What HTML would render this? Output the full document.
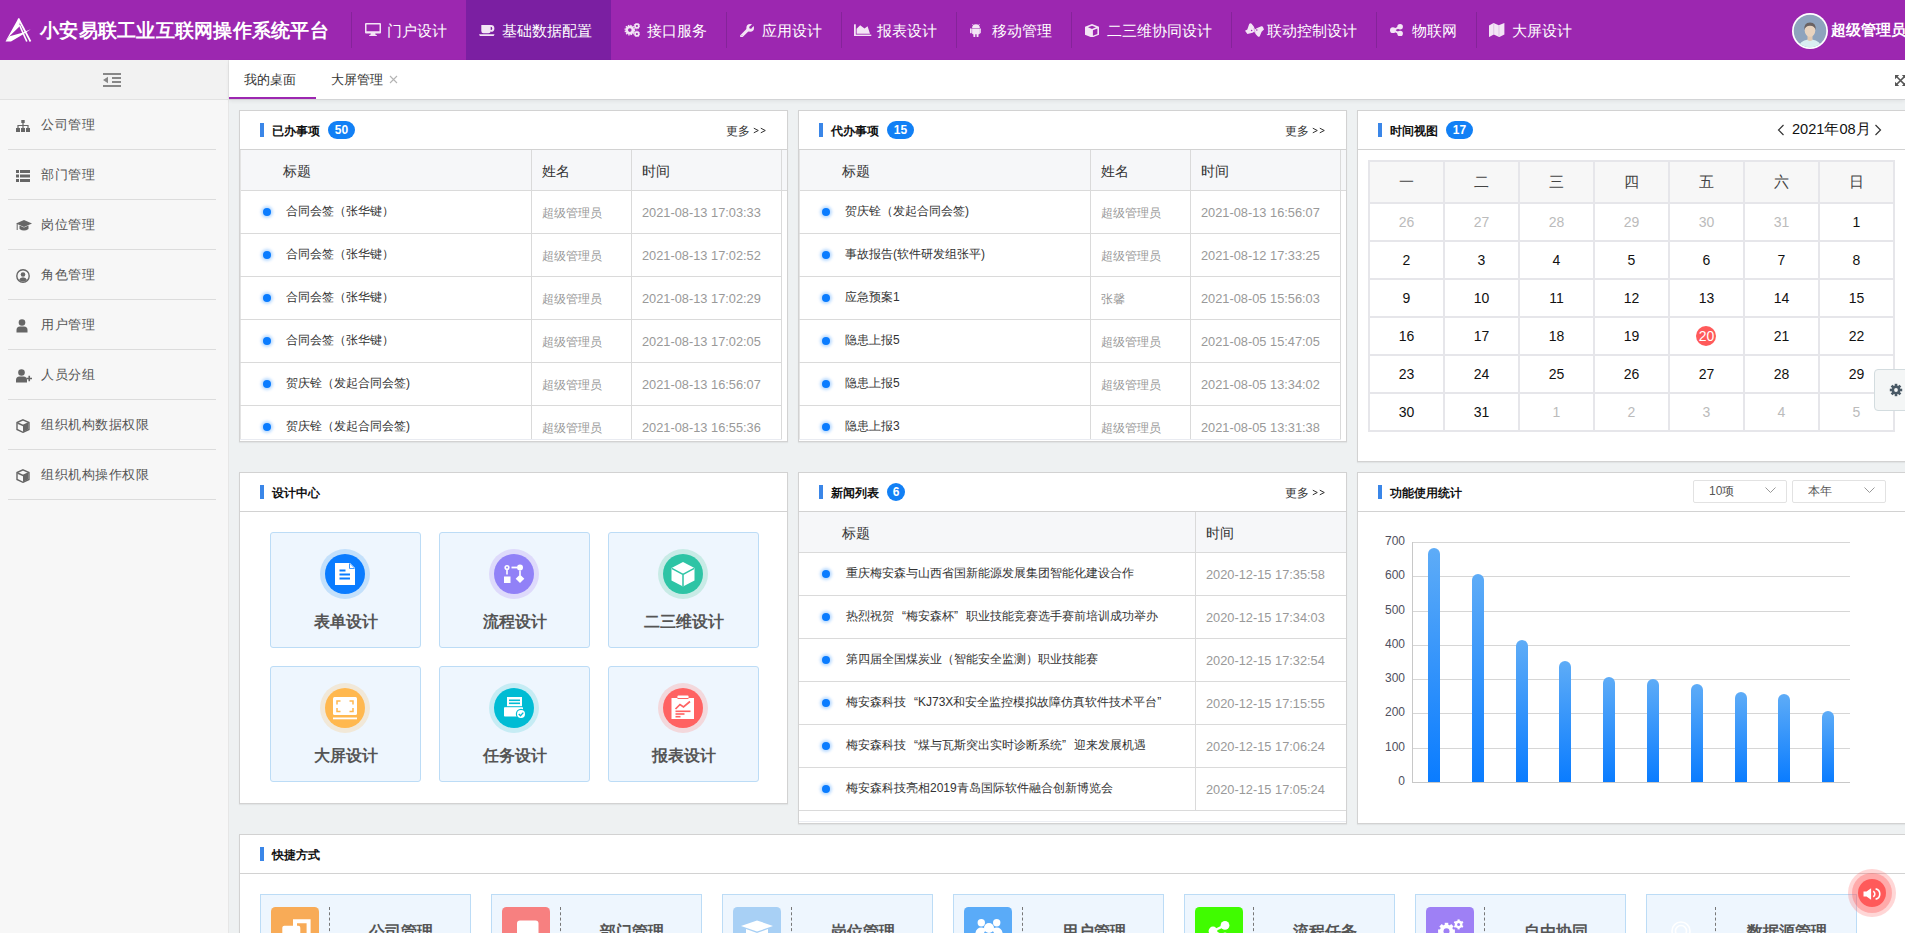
<!DOCTYPE html><html><head><meta charset="utf-8"><title>dashboard</title><style>
*{box-sizing:border-box;margin:0;padding:0}
html,body{width:1905px;height:933px;overflow:hidden}
body{font-family:"Liberation Sans",sans-serif;background:#eef1f2;position:relative;color:#333}
div,span,svg{position:absolute}
.nw{white-space:nowrap}
</style></head><body>
<div style="left:0px;top:0px;width:1905px;height:60px;background:#9c27b0"></div>
<svg style="left:2px;top:14px" width="34" height="32" viewBox="2 14 34 32"><path d="M18.4 18.3 L20 21.5 L19.2 26.8 L10.2 35.6 L6.0 41.6 L5.6 41.2 Z" fill="#fff"/><path d="M5.8 41.6 L11 41.4 L22 35 L30.8 29.3 L22.3 32.8 L9.6 36.2 Z" fill="#fff"/><path d="M18.4 18.5 L30.5 41.5" stroke="#fff" stroke-width="1.7"/><path d="M19.5 25 L26.8 41.5" stroke="#fff" stroke-width="1.6"/></svg>
<div class="nw" style="left:40px;top:18px;font-size:19px;line-height:26px;color:#fff;font-weight:bold;letter-spacing:0.25px;">小安易联工业互联网操作系统平台</div>
<div style="left:351px;top:0px;width:115px;height:60px;"><div style="left:0;top:12px;width:1px;height:36px;background:#85239a"></div><svg style="left:13.5px;top:23px" width="16" height="13" viewBox="0 0 16 13"><path d="M1 0H15A1 1 0 0 1 16 1V9.5A1 1 0 0 1 15 10.5H10.2L10.7 12H11.8V13H4.2V12H5.3L5.8 10.5H1A1 1 0 0 1 0 9.5V1A1 1 0 0 1 1 0ZM1.5 1.5V8.2H14.5V1.5Z" fill="#f3e5f5" fill-rule="evenodd"/></svg><div class="nw" style="left:36px;top:22px;font-size:15px;line-height:18px;color:#fff">门户设计</div></div>
<div style="left:466px;top:0px;width:145px;height:60px;background:#7b1fa2;"><svg style="left:13.3px;top:24.8px" width="15.6" height="11.4" viewBox="0 0 15.6 11.4"><path d="M2.3 0H12A3.4 3.4 0 0 1 12 6.8H11.7V6A2.2 2.2 0 0 1 9.5 8.2H4.5A2.2 2.2 0 0 1 2.3 6ZM11.7 1.8V5A1.6 1.6 0 0 0 11.7 1.8Z" fill="#f3e5f5" fill-rule="evenodd"/><path d="M0 9.2H15.6L14.6 11.2H1Z" fill="#f3e5f5"/></svg><div class="nw" style="left:36px;top:22px;font-size:15px;line-height:18px;color:#fff">基础数据配置</div></div>
<div style="left:611px;top:0px;width:115px;height:60px;"><svg style="left:13.3px;top:22.9px" width="16.2" height="14" viewBox="0 0 16.2 14"><circle cx="5.8" cy="7.1" r="3.1" fill="none" stroke="#f3e5f5" stroke-width="2.6"/><circle cx="5.8" cy="7.1" r="4.7" fill="none" stroke="#f3e5f5" stroke-width="1.3" stroke-dasharray="1.45 1.0"/><circle cx="12.9" cy="3.0" r="1.9" fill="none" stroke="#f3e5f5" stroke-width="1.6"/><circle cx="12.9" cy="3.0" r="2.9" fill="none" stroke="#f3e5f5" stroke-width="0.9" stroke-dasharray="1.0 1.0"/><circle cx="12.9" cy="11.0" r="1.9" fill="none" stroke="#f3e5f5" stroke-width="1.6"/><circle cx="12.9" cy="11.0" r="2.9" fill="none" stroke="#f3e5f5" stroke-width="0.9" stroke-dasharray="1.0 1.0"/></svg><div class="nw" style="left:36px;top:22px;font-size:15px;line-height:18px;color:#fff">接口服务</div></div>
<div style="left:726px;top:0px;width:115px;height:60px;"><div style="left:0;top:12px;width:1px;height:36px;background:#85239a"></div><svg style="left:13.5px;top:23.8px" width="14.2" height="13.6" viewBox="0 0 14.2 13.6"><path d="M1.6 12 L8 5.6" stroke="#f3e5f5" stroke-width="3" stroke-linecap="round"/><circle cx="10.2" cy="3.9" r="3.8" fill="#f3e5f5"/><path d="M10.6 3.3 L14.5 -0.5" stroke="#9c27b0" stroke-width="2.4"/><circle cx="10.6" cy="3.4" r="1.3" fill="#9c27b0"/><circle cx="2" cy="11.6" r="0.55" fill="#c39acb"/></svg><div class="nw" style="left:36px;top:22px;font-size:15px;line-height:18px;color:#fff">应用设计</div></div>
<div style="left:841px;top:0px;width:115px;height:60px;"><div style="left:0;top:12px;width:1px;height:36px;background:#85239a"></div><svg style="left:13.3px;top:23.8px" width="17.3" height="12.2" viewBox="0 0 17.3 12.2"><rect x="0" y="0.3" width="1.8" height="11.9" fill="#f3e5f5"/><rect x="0" y="10.6" width="17.3" height="1.6" fill="#f3e5f5"/><path d="M2.6 4.8L6.2 1.2L10.5 4.5L13.6 2.3L16 9.7H2.6Z" fill="#f3e5f5"/></svg><div class="nw" style="left:36px;top:22px;font-size:15px;line-height:18px;color:#fff">报表设计</div></div>
<div style="left:956px;top:0px;width:115px;height:60px;"><div style="left:0;top:12px;width:1px;height:36px;background:#85239a"></div><svg style="left:13.6px;top:24px" width="11.9" height="13.3" viewBox="0 0 11.9 13.3"><path d="M2.1 4.1A3.9 3.9 0 0 1 9.9 4.1Z" fill="#f3e5f5"/><path d="M3.2 1.2L2.5 0.1M8.8 1.2L9.5 0.1" stroke="#f3e5f5" stroke-width="0.8"/><path d="M2.1 4.5H9.9V9.3A1 1 0 0 1 8.9 10.3H3.1A1 1 0 0 1 2.1 9.3Z" fill="#f3e5f5"/><rect x="0" y="4.3" width="1.7" height="5" rx="0.85" fill="#f3e5f5"/><rect x="10.2" y="4.3" width="1.7" height="5" rx="0.85" fill="#f3e5f5"/><rect x="3.4" y="9" width="1.9" height="4.3" rx="0.95" fill="#f3e5f5"/><rect x="6.6" y="9" width="1.9" height="4.3" rx="0.95" fill="#f3e5f5"/></svg><div class="nw" style="left:36px;top:22px;font-size:15px;line-height:18px;color:#fff">移动管理</div></div>
<div style="left:1071px;top:0px;width:160px;height:60px;"><div style="left:0;top:12px;width:1px;height:36px;background:#85239a"></div><svg style="left:13.6px;top:23.7px" width="14" height="13.6" viewBox="0 0 14 13.6"><path d="M7 0L14 2.8V10.7L7 13.6L0 10.7V2.8ZM3 3.3L7 1.8L11 3.3L7 5ZM7.9 6.3L12.4 4.6V9.9L7.9 11.8Z" fill="#f3e5f5" fill-rule="evenodd"/></svg><div class="nw" style="left:36px;top:22px;font-size:15px;line-height:18px;color:#fff">二三维协同设计</div></div>
<div style="left:1231px;top:0px;width:145px;height:60px;"><div style="left:0;top:12px;width:1px;height:36px;background:#85239a"></div><svg style="left:13.5px;top:22.9px" width="19" height="14.2" viewBox="0 0 19 14.2"><path d="M0 7.8L2.3 6.4L4.2 1.1Q5.3 -0.2 6.6 0.8L8.6 3.2L9.6 5.6L10.3 7.9L7.6 9.8L2.4 10.9Z" fill="#f3e5f5"/><path d="M9 7.2L11.6 5.2L16.3 3.2Q17.6 2.9 18.1 4.3L19 6.6L16.6 8.8L14.9 13Q14 14.3 12.9 13.6L11 11.5L9.4 9Z" fill="#f3e5f5"/><circle cx="6.6" cy="7.6" r="0.75" fill="#9c27b0"/><circle cx="11.8" cy="6.9" r="0.75" fill="#9c27b0"/><path d="M8.6 5.3L10.4 9.6" stroke="#c89ad0" stroke-width="0.6"/></svg><div class="nw" style="left:36px;top:22px;font-size:15px;line-height:18px;color:#fff">联动控制设计</div></div>
<div style="left:1376px;top:0px;width:100px;height:60px;"><div style="left:0;top:12px;width:1px;height:36px;background:#85239a"></div><svg style="left:13.5px;top:23.8px" width="13" height="12.4" viewBox="0 0 13 12.4"><path d="M2.9 6.2L10.1 2.8M2.9 6.2L10.1 9.6" stroke="#f3e5f5" stroke-width="1.9"/><circle cx="2.9" cy="6.2" r="2.9" fill="#f3e5f5"/><circle cx="10.1" cy="2.8" r="2.8" fill="#f3e5f5"/><circle cx="10.1" cy="9.6" r="2.8" fill="#f3e5f5"/></svg><div class="nw" style="left:36px;top:22px;font-size:15px;line-height:18px;color:#fff">物联网</div></div>
<div style="left:1476px;top:0px;width:115px;height:60px;"><div style="left:0;top:12px;width:1px;height:36px;background:#85239a"></div><svg style="left:13.3px;top:22.9px" width="15.4" height="14.1" viewBox="0 0 15.4 14.1"><path d="M0 2.5L4.6 0L9.7 2.3L15.4 0V11.6L10.3 14.1L4.8 11.6L0 14.1Z" fill="#f3e5f5"/><path d="M4.7 0.3V11.6M10 2.4V13.8" stroke="#d9b3df" stroke-width="0.7"/></svg><div class="nw" style="left:36px;top:22px;font-size:15px;line-height:18px;color:#fff">大屏设计</div></div>
<svg style="left:1791px;top:12px" width="38" height="38" viewBox="-1 -1 38 38"><defs><clipPath id="avc"><circle cx="18" cy="18" r="16.3"/></clipPath></defs><circle cx="18" cy="18" r="18" fill="#fff"/><g clip-path="url(#avc)"><rect x="0" y="0" width="36" height="36" fill="#8ea3bd"/><path d="M6 36 Q7 28 16 26.5 H20 Q29 28 30 36z" fill="#d9eef1"/><path d="M15.5 22 h5 v5 q-2.5 2 -5 0z" fill="#e2c9b2"/><ellipse cx="18" cy="17.5" rx="5.3" ry="6.3" fill="#e8d3bf"/><path d="M12.5 17 Q11.5 9.5 18 9.5 Q24.5 9.5 23.5 17 Q23 13 18 12.8 Q13 13 12.5 17z" fill="#6a6262"/></g></svg>
<div class="nw" style="left:1831px;top:20px;font-size:15px;line-height:20px;color:#fff;font-weight:bold;">超级管理员</div>
<div style="left:0px;top:60px;width:229px;height:873px;background:#f7f7f7;border-right:1px solid #e6e6e6"></div>
<div style="left:0px;top:60px;width:228px;height:40px;background:#f2f2f2;border-bottom:1px solid #e2e2e2"></div>
<svg style="left:103px;top:73px" width="18" height="14" viewBox="0 0 18 14"><rect x="0" y="0" width="18" height="2" fill="#888"/><rect x="9" y="4" width="9" height="2" fill="#888"/><rect x="9" y="8" width="9" height="2" fill="#888"/><rect x="0" y="12" width="18" height="2" fill="#888"/><path d="M0 7 L5 3.8 V10.2z" fill="#888"/></svg>
<div style="left:8px;top:149px;width:208px;height:1px;background:#dcdcdc"></div>
<svg style="left:16px;top:120px" width="14" height="12" viewBox="0 0 14 12"><rect x="5.3" y="0" width="3.4" height="3" fill="#666"/><path d="M7 3v2.5 M2 8V5.5h10V8 M7 5.5V8" stroke="#666" stroke-width="1.2" fill="none"/><rect x="0" y="8" width="4" height="4" fill="#666"/><rect x="5" y="8" width="4" height="4" fill="#666"/><rect x="10" y="8" width="4" height="4" fill="#666"/></svg>
<div class="nw" style="left:41px;top:116px;font-size:13px;line-height:18px;color:#555;letter-spacing:0.5px;">公司管理</div>
<div style="left:8px;top:199px;width:208px;height:1px;background:#dcdcdc"></div>
<svg style="left:16px;top:170px" width="14" height="12" viewBox="0 0 14 12"><rect x="0" y="0" width="3" height="3" fill="#666"/><rect x="4" y="0" width="10" height="3" fill="#666"/><rect x="0" y="4.5" width="3" height="3" fill="#666"/><rect x="4" y="4.5" width="10" height="3" fill="#666"/><rect x="0" y="9" width="3" height="3" fill="#666"/><rect x="4" y="9" width="10" height="3" fill="#666"/></svg>
<div class="nw" style="left:41px;top:166px;font-size:13px;line-height:18px;color:#555;letter-spacing:0.5px;">部门管理</div>
<div style="left:8px;top:249px;width:208px;height:1px;background:#dcdcdc"></div>
<svg style="left:16px;top:220px" width="16" height="12" viewBox="0 0 16 12"><path d="M8 0 L16 3.5 L8 7 L0 3.5z" fill="#666"/><path d="M3.5 5.5 V9 Q8 12 12.5 9 V5.5 L8 7.5z" fill="#666"/><path d="M1.2 4 V10" stroke="#666" stroke-width="1"/></svg>
<div class="nw" style="left:41px;top:216px;font-size:13px;line-height:18px;color:#555;letter-spacing:0.5px;">岗位管理</div>
<div style="left:8px;top:299px;width:208px;height:1px;background:#dcdcdc"></div>
<svg style="left:16px;top:269px" width="14" height="14" viewBox="0 0 14 14"><circle cx="7" cy="7" r="6.2" fill="none" stroke="#666" stroke-width="1.4"/><circle cx="7" cy="5.5" r="2.3" fill="#666"/><path d="M3 11 Q4 8.3 7 8.3 Q10 8.3 11 11 Q9 12.6 7 12.6 Q5 12.6 3 11z" fill="#666"/></svg>
<div class="nw" style="left:41px;top:266px;font-size:13px;line-height:18px;color:#555;letter-spacing:0.5px;">角色管理</div>
<div style="left:8px;top:349px;width:208px;height:1px;background:#dcdcdc"></div>
<svg style="left:16px;top:319px" width="12" height="14" viewBox="0 0 12 14"><circle cx="6" cy="3.5" r="3.3" fill="#666"/><path d="M0.5 13.5 V11 Q0.5 7.5 4 7.5 H8 Q11.5 7.5 11.5 11 V13.5z" fill="#666"/></svg>
<div class="nw" style="left:41px;top:316px;font-size:13px;line-height:18px;color:#555;letter-spacing:0.5px;">用户管理</div>
<div style="left:8px;top:399px;width:208px;height:1px;background:#dcdcdc"></div>
<svg style="left:16px;top:369px" width="16" height="14" viewBox="0 0 16 14"><circle cx="5.5" cy="3.5" r="3.3" fill="#666"/><path d="M0 13.5 V11 Q0 7.5 3.5 7.5 H7.5 Q11 7.5 11 11 V13.5z" fill="#666"/><path d="M10.5 9.5 H16 M13.25 6.8 V12.2" stroke="#666" stroke-width="1.6"/></svg>
<div class="nw" style="left:41px;top:366px;font-size:13px;line-height:18px;color:#555;letter-spacing:0.5px;">人员分组</div>
<div style="left:8px;top:449px;width:208px;height:1px;background:#dcdcdc"></div>
<svg style="left:16px;top:419px" width="14" height="14" viewBox="0 0 14 14"><path d="M7 0.8 L13 3.5 V10.5 L7 13.3 L1 10.5 V3.5 Z" fill="none" stroke="#666" stroke-width="1.4"/><path d="M1.5 4 L7 6.5 L12.5 4" fill="none" stroke="#666" stroke-width="1.4"/><path d="M7 6.5 V13 L12.3 10.3 V4.3z" fill="#666"/></svg>
<div class="nw" style="left:41px;top:416px;font-size:13px;line-height:18px;color:#555;letter-spacing:0.5px;">组织机构数据权限</div>
<div style="left:8px;top:499px;width:208px;height:1px;background:#dcdcdc"></div>
<svg style="left:16px;top:469px" width="14" height="14" viewBox="0 0 14 14"><path d="M7 0.8 L13 3.5 V10.5 L7 13.3 L1 10.5 V3.5 Z" fill="none" stroke="#666" stroke-width="1.4"/><path d="M1.5 4 L7 6.5 L12.5 4" fill="none" stroke="#666" stroke-width="1.4"/><path d="M7 6.5 V13 L12.3 10.3 V4.3z" fill="#666"/></svg>
<div class="nw" style="left:41px;top:466px;font-size:13px;line-height:18px;color:#555;letter-spacing:0.5px;">组织机构操作权限</div>
<div style="left:229px;top:60px;width:1676px;height:39px;background:#fff;box-shadow:0 2px 4px rgba(0,0,0,.07)"></div>
<div style="left:229px;top:99px;width:1676px;height:1px;background:#d3d4d6"></div>
<div style="left:229px;top:97px;width:87px;height:2px;background:#9c27b0"></div>
<div class="nw" style="left:244px;top:71px;font-size:13px;line-height:18px;color:#333;">我的桌面</div>
<div class="nw" style="left:331px;top:71px;font-size:13px;line-height:18px;color:#333;">大屏管理</div>
<svg style="left:389px;top:75px" width="9" height="9" viewBox="0 0 9 9"><path d="M1 1 L8 8 M8 1 L1 8" stroke="#b4b4b4" stroke-width="1.1"/></svg>
<svg style="left:1895px;top:75px" width="11" height="11" viewBox="0 0 11 11"><path d="M1.5 1.5 L9.5 9.5 M9.5 1.5 L1.5 9.5" stroke="#555" stroke-width="1.6"/><path d="M0 0h4.2l-4.2 4.2z M11 0v4.2l-4.2-4.2z M0 11v-4.2l4.2 4.2z M11 11h-4.2l4.2-4.2z" fill="#555"/></svg>
<div style="left:239px;top:110px;width:549px;height:332px;background:#fff;border:1px solid #d2d2d2;box-shadow:0 1px 1px rgba(0,0,0,.05)"></div>
<div style="left:239px;top:149px;width:549px;height:1px;background:#d2d2d2"></div>
<div style="left:260px;top:123px;width:4px;height:14px;background:#3a86e8"></div>
<div class="nw" style="left:272px;top:123px;font-size:12px;line-height:16px;color:#111;font-weight:bold;">已办事项</div>
<div style="left:328px;top:121px;width:27px;height:18px;border-radius:9px;background:#1280f5;color:#fff;font-size:12px;font-weight:bold;line-height:18px;text-align:center">50</div>
<div class="nw" style="left:726px;top:123px;font-size:12px;line-height:16px;color:#333">更多</div>
<svg style="left:753px;top:127px" width="14" height="7" viewBox="0 0 14 7"><path d="M0.8 1.2 L5.3 3.5 L0.8 5.8 M7.8 1.2 L12.3 3.5 L7.8 5.8" stroke="#333" stroke-width="1" fill="none"/></svg>
<div style="left:240px;top:150px;width:547px;height:40px;background:#f6f7f9"></div>
<div style="left:240px;top:190px;width:547px;height:1px;background:#dadada"></div>
<div style="left:240px;top:150px;width:1px;height:290px;background:#e4e4e4"></div>
<div style="left:531px;top:150px;width:1px;height:289px;background:#dadada"></div>
<div style="left:631px;top:150px;width:1px;height:289px;background:#dadada"></div>
<div style="left:781px;top:150px;width:1px;height:289px;background:#dadada"></div>
<div style="left:240px;top:439px;width:542px;height:1px;background:#e9ebf1"></div>
<div class="nw" style="left:283px;top:162px;font-size:14px;line-height:18px;color:#333;">标题</div>
<div class="nw" style="left:542px;top:162px;font-size:14px;line-height:18px;color:#333;">姓名</div>
<div class="nw" style="left:642px;top:162px;font-size:14px;line-height:18px;color:#333;">时间</div>
<div style="left:240px;top:233px;width:542px;height:1px;background:#dadada"></div>
<div style="left:263px;top:208px;width:8px;height:8px;border-radius:4px;background:#0a7cff;box-shadow:0 0 3px 2px rgba(10,124,255,.28)"></div>
<div class="nw" style="left:286px;top:202px;font-size:12px;line-height:18px;color:#333;">合同会签（张华键）</div>
<div class="nw" style="left:542px;top:204px;font-size:12px;line-height:18px;color:#999;">超级管理员</div>
<div class="nw" style="left:642px;top:204px;font-size:12.8px;line-height:18px;color:#999;">2021-08-13 17:03:33</div>
<div style="left:240px;top:276px;width:542px;height:1px;background:#dadada"></div>
<div style="left:263px;top:251px;width:8px;height:8px;border-radius:4px;background:#0a7cff;box-shadow:0 0 3px 2px rgba(10,124,255,.28)"></div>
<div class="nw" style="left:286px;top:245px;font-size:12px;line-height:18px;color:#333;">合同会签（张华键）</div>
<div class="nw" style="left:542px;top:247px;font-size:12px;line-height:18px;color:#999;">超级管理员</div>
<div class="nw" style="left:642px;top:247px;font-size:12.8px;line-height:18px;color:#999;">2021-08-13 17:02:52</div>
<div style="left:240px;top:319px;width:542px;height:1px;background:#dadada"></div>
<div style="left:263px;top:294px;width:8px;height:8px;border-radius:4px;background:#0a7cff;box-shadow:0 0 3px 2px rgba(10,124,255,.28)"></div>
<div class="nw" style="left:286px;top:288px;font-size:12px;line-height:18px;color:#333;">合同会签（张华键）</div>
<div class="nw" style="left:542px;top:290px;font-size:12px;line-height:18px;color:#999;">超级管理员</div>
<div class="nw" style="left:642px;top:290px;font-size:12.8px;line-height:18px;color:#999;">2021-08-13 17:02:29</div>
<div style="left:240px;top:362px;width:542px;height:1px;background:#dadada"></div>
<div style="left:263px;top:337px;width:8px;height:8px;border-radius:4px;background:#0a7cff;box-shadow:0 0 3px 2px rgba(10,124,255,.28)"></div>
<div class="nw" style="left:286px;top:331px;font-size:12px;line-height:18px;color:#333;">合同会签（张华键）</div>
<div class="nw" style="left:542px;top:333px;font-size:12px;line-height:18px;color:#999;">超级管理员</div>
<div class="nw" style="left:642px;top:333px;font-size:12.8px;line-height:18px;color:#999;">2021-08-13 17:02:05</div>
<div style="left:240px;top:405px;width:542px;height:1px;background:#dadada"></div>
<div style="left:263px;top:380px;width:8px;height:8px;border-radius:4px;background:#0a7cff;box-shadow:0 0 3px 2px rgba(10,124,255,.28)"></div>
<div class="nw" style="left:286px;top:374px;font-size:12px;line-height:18px;color:#333;">贺庆铨（发起合同会签)</div>
<div class="nw" style="left:542px;top:376px;font-size:12px;line-height:18px;color:#999;">超级管理员</div>
<div class="nw" style="left:642px;top:376px;font-size:12.8px;line-height:18px;color:#999;">2021-08-13 16:56:07</div>
<div style="left:263px;top:423px;width:8px;height:8px;border-radius:4px;background:#0a7cff;box-shadow:0 0 3px 2px rgba(10,124,255,.28)"></div>
<div class="nw" style="left:286px;top:417px;font-size:12px;line-height:18px;color:#333;">贺庆铨（发起合同会签)</div>
<div class="nw" style="left:542px;top:419px;font-size:12px;line-height:18px;color:#999;">超级管理员</div>
<div class="nw" style="left:642px;top:419px;font-size:12.8px;line-height:18px;color:#999;">2021-08-13 16:55:36</div>
<div style="left:798px;top:110px;width:549px;height:332px;background:#fff;border:1px solid #d2d2d2;box-shadow:0 1px 1px rgba(0,0,0,.05)"></div>
<div style="left:798px;top:149px;width:549px;height:1px;background:#d2d2d2"></div>
<div style="left:819px;top:123px;width:4px;height:14px;background:#3a86e8"></div>
<div class="nw" style="left:831px;top:123px;font-size:12px;line-height:16px;color:#111;font-weight:bold;">代办事项</div>
<div style="left:887px;top:121px;width:27px;height:18px;border-radius:9px;background:#1280f5;color:#fff;font-size:12px;font-weight:bold;line-height:18px;text-align:center">15</div>
<div class="nw" style="left:1285px;top:123px;font-size:12px;line-height:16px;color:#333">更多</div>
<svg style="left:1312px;top:127px" width="14" height="7" viewBox="0 0 14 7"><path d="M0.8 1.2 L5.3 3.5 L0.8 5.8 M7.8 1.2 L12.3 3.5 L7.8 5.8" stroke="#333" stroke-width="1" fill="none"/></svg>
<div style="left:799px;top:150px;width:547px;height:40px;background:#f6f7f9"></div>
<div style="left:799px;top:190px;width:547px;height:1px;background:#dadada"></div>
<div style="left:799px;top:150px;width:1px;height:290px;background:#e4e4e4"></div>
<div style="left:1090px;top:150px;width:1px;height:289px;background:#dadada"></div>
<div style="left:1190px;top:150px;width:1px;height:289px;background:#dadada"></div>
<div style="left:1340px;top:150px;width:1px;height:289px;background:#dadada"></div>
<div style="left:799px;top:439px;width:542px;height:1px;background:#e9ebf1"></div>
<div class="nw" style="left:842px;top:162px;font-size:14px;line-height:18px;color:#333;">标题</div>
<div class="nw" style="left:1101px;top:162px;font-size:14px;line-height:18px;color:#333;">姓名</div>
<div class="nw" style="left:1201px;top:162px;font-size:14px;line-height:18px;color:#333;">时间</div>
<div style="left:799px;top:233px;width:542px;height:1px;background:#dadada"></div>
<div style="left:822px;top:208px;width:8px;height:8px;border-radius:4px;background:#0a7cff;box-shadow:0 0 3px 2px rgba(10,124,255,.28)"></div>
<div class="nw" style="left:845px;top:202px;font-size:12px;line-height:18px;color:#333;">贺庆铨（发起合同会签)</div>
<div class="nw" style="left:1101px;top:204px;font-size:12px;line-height:18px;color:#999;">超级管理员</div>
<div class="nw" style="left:1201px;top:204px;font-size:12.8px;line-height:18px;color:#999;">2021-08-13 16:56:07</div>
<div style="left:799px;top:276px;width:542px;height:1px;background:#dadada"></div>
<div style="left:822px;top:251px;width:8px;height:8px;border-radius:4px;background:#0a7cff;box-shadow:0 0 3px 2px rgba(10,124,255,.28)"></div>
<div class="nw" style="left:845px;top:245px;font-size:12px;line-height:18px;color:#333;">事故报告(软件研发组张平)</div>
<div class="nw" style="left:1101px;top:247px;font-size:12px;line-height:18px;color:#999;">超级管理员</div>
<div class="nw" style="left:1201px;top:247px;font-size:12.8px;line-height:18px;color:#999;">2021-08-12 17:33:25</div>
<div style="left:799px;top:319px;width:542px;height:1px;background:#dadada"></div>
<div style="left:822px;top:294px;width:8px;height:8px;border-radius:4px;background:#0a7cff;box-shadow:0 0 3px 2px rgba(10,124,255,.28)"></div>
<div class="nw" style="left:845px;top:288px;font-size:12px;line-height:18px;color:#333;">应急预案1</div>
<div class="nw" style="left:1101px;top:290px;font-size:12px;line-height:18px;color:#999;">张馨</div>
<div class="nw" style="left:1201px;top:290px;font-size:12.8px;line-height:18px;color:#999;">2021-08-05 15:56:03</div>
<div style="left:799px;top:362px;width:542px;height:1px;background:#dadada"></div>
<div style="left:822px;top:337px;width:8px;height:8px;border-radius:4px;background:#0a7cff;box-shadow:0 0 3px 2px rgba(10,124,255,.28)"></div>
<div class="nw" style="left:845px;top:331px;font-size:12px;line-height:18px;color:#333;">隐患上报5</div>
<div class="nw" style="left:1101px;top:333px;font-size:12px;line-height:18px;color:#999;">超级管理员</div>
<div class="nw" style="left:1201px;top:333px;font-size:12.8px;line-height:18px;color:#999;">2021-08-05 15:47:05</div>
<div style="left:799px;top:405px;width:542px;height:1px;background:#dadada"></div>
<div style="left:822px;top:380px;width:8px;height:8px;border-radius:4px;background:#0a7cff;box-shadow:0 0 3px 2px rgba(10,124,255,.28)"></div>
<div class="nw" style="left:845px;top:374px;font-size:12px;line-height:18px;color:#333;">隐患上报5</div>
<div class="nw" style="left:1101px;top:376px;font-size:12px;line-height:18px;color:#999;">超级管理员</div>
<div class="nw" style="left:1201px;top:376px;font-size:12.8px;line-height:18px;color:#999;">2021-08-05 13:34:02</div>
<div style="left:822px;top:423px;width:8px;height:8px;border-radius:4px;background:#0a7cff;box-shadow:0 0 3px 2px rgba(10,124,255,.28)"></div>
<div class="nw" style="left:845px;top:417px;font-size:12px;line-height:18px;color:#333;">隐患上报3</div>
<div class="nw" style="left:1101px;top:419px;font-size:12px;line-height:18px;color:#999;">超级管理员</div>
<div class="nw" style="left:1201px;top:419px;font-size:12.8px;line-height:18px;color:#999;">2021-08-05 13:31:38</div>
<div style="left:1357px;top:110px;width:600px;height:352px;background:#fff;border:1px solid #d2d2d2;box-shadow:0 1px 1px rgba(0,0,0,.05)"></div>
<div style="left:1357px;top:149px;width:600px;height:1px;background:#d2d2d2"></div>
<div style="left:1378px;top:123px;width:4px;height:14px;background:#3a86e8"></div>
<div class="nw" style="left:1390px;top:123px;font-size:12px;line-height:16px;color:#111;font-weight:bold;">时间视图</div>
<div style="left:1446px;top:121px;width:27px;height:18px;border-radius:9px;background:#1280f5;color:#fff;font-size:12px;font-weight:bold;line-height:18px;text-align:center">17</div>
<svg style="left:1777px;top:124px" width="8" height="12" viewBox="0 0 8 12"><path d="M6.5 1 L1.5 6 L6.5 11" stroke="#333" stroke-width="1.2" fill="none"/></svg>
<div class="nw" style="left:1792px;top:120px;font-size:14.6px;line-height:18px;color:#111;">2021年08月</div>
<svg style="left:1874px;top:124px" width="8" height="12" viewBox="0 0 8 12"><path d="M1.5 1 L6.5 6 L1.5 11" stroke="#333" stroke-width="1.2" fill="none"/></svg>
<div style="left:1368px;top:160px;width:527px;height:272px;background:#fff;border:2px solid #e6e6ea"></div>
<div style="left:1370px;top:162px;width:523px;height:41px;background:#f7f7f7"></div>
<div style="left:1443px;top:160px;width:2px;height:272px;background:#e6e6ea"></div>
<div style="left:1518px;top:160px;width:2px;height:272px;background:#e6e6ea"></div>
<div style="left:1593px;top:160px;width:2px;height:272px;background:#e6e6ea"></div>
<div style="left:1668px;top:160px;width:2px;height:272px;background:#e6e6ea"></div>
<div style="left:1743px;top:160px;width:2px;height:272px;background:#e6e6ea"></div>
<div style="left:1818px;top:160px;width:2px;height:272px;background:#e6e6ea"></div>
<div style="left:1368px;top:202px;width:527px;height:2px;background:#e6e6ea"></div>
<div style="left:1368px;top:240px;width:527px;height:2px;background:#e6e6ea"></div>
<div style="left:1368px;top:278px;width:527px;height:2px;background:#e6e6ea"></div>
<div style="left:1368px;top:316px;width:527px;height:2px;background:#e6e6ea"></div>
<div style="left:1368px;top:354px;width:527px;height:2px;background:#e6e6ea"></div>
<div style="left:1368px;top:392px;width:527px;height:2px;background:#e6e6ea"></div>
<div class="nw" style="left:1370px;top:172px;width:73px;text-align:center;font-size:15px;line-height:20px;color:#444">一</div>
<div class="nw" style="left:1445px;top:172px;width:73px;text-align:center;font-size:15px;line-height:20px;color:#444">二</div>
<div class="nw" style="left:1520px;top:172px;width:73px;text-align:center;font-size:15px;line-height:20px;color:#444">三</div>
<div class="nw" style="left:1595px;top:172px;width:73px;text-align:center;font-size:15px;line-height:20px;color:#444">四</div>
<div class="nw" style="left:1670px;top:172px;width:73px;text-align:center;font-size:15px;line-height:20px;color:#444">五</div>
<div class="nw" style="left:1745px;top:172px;width:73px;text-align:center;font-size:15px;line-height:20px;color:#444">六</div>
<div class="nw" style="left:1820px;top:172px;width:73px;text-align:center;font-size:15px;line-height:20px;color:#444">日</div>
<div class="nw" style="left:1370px;top:213px;width:73px;text-align:center;font-size:14px;line-height:18px;color:#bbb">26</div>
<div class="nw" style="left:1445px;top:213px;width:73px;text-align:center;font-size:14px;line-height:18px;color:#bbb">27</div>
<div class="nw" style="left:1520px;top:213px;width:73px;text-align:center;font-size:14px;line-height:18px;color:#bbb">28</div>
<div class="nw" style="left:1595px;top:213px;width:73px;text-align:center;font-size:14px;line-height:18px;color:#bbb">29</div>
<div class="nw" style="left:1670px;top:213px;width:73px;text-align:center;font-size:14px;line-height:18px;color:#bbb">30</div>
<div class="nw" style="left:1745px;top:213px;width:73px;text-align:center;font-size:14px;line-height:18px;color:#bbb">31</div>
<div class="nw" style="left:1820px;top:213px;width:73px;text-align:center;font-size:14px;line-height:18px;color:#111">1</div>
<div class="nw" style="left:1370px;top:251px;width:73px;text-align:center;font-size:14px;line-height:18px;color:#111">2</div>
<div class="nw" style="left:1445px;top:251px;width:73px;text-align:center;font-size:14px;line-height:18px;color:#111">3</div>
<div class="nw" style="left:1520px;top:251px;width:73px;text-align:center;font-size:14px;line-height:18px;color:#111">4</div>
<div class="nw" style="left:1595px;top:251px;width:73px;text-align:center;font-size:14px;line-height:18px;color:#111">5</div>
<div class="nw" style="left:1670px;top:251px;width:73px;text-align:center;font-size:14px;line-height:18px;color:#111">6</div>
<div class="nw" style="left:1745px;top:251px;width:73px;text-align:center;font-size:14px;line-height:18px;color:#111">7</div>
<div class="nw" style="left:1820px;top:251px;width:73px;text-align:center;font-size:14px;line-height:18px;color:#111">8</div>
<div class="nw" style="left:1370px;top:289px;width:73px;text-align:center;font-size:14px;line-height:18px;color:#111">9</div>
<div class="nw" style="left:1445px;top:289px;width:73px;text-align:center;font-size:14px;line-height:18px;color:#111">10</div>
<div class="nw" style="left:1520px;top:289px;width:73px;text-align:center;font-size:14px;line-height:18px;color:#111">11</div>
<div class="nw" style="left:1595px;top:289px;width:73px;text-align:center;font-size:14px;line-height:18px;color:#111">12</div>
<div class="nw" style="left:1670px;top:289px;width:73px;text-align:center;font-size:14px;line-height:18px;color:#111">13</div>
<div class="nw" style="left:1745px;top:289px;width:73px;text-align:center;font-size:14px;line-height:18px;color:#111">14</div>
<div class="nw" style="left:1820px;top:289px;width:73px;text-align:center;font-size:14px;line-height:18px;color:#111">15</div>
<div class="nw" style="left:1370px;top:327px;width:73px;text-align:center;font-size:14px;line-height:18px;color:#111">16</div>
<div class="nw" style="left:1445px;top:327px;width:73px;text-align:center;font-size:14px;line-height:18px;color:#111">17</div>
<div class="nw" style="left:1520px;top:327px;width:73px;text-align:center;font-size:14px;line-height:18px;color:#111">18</div>
<div class="nw" style="left:1595px;top:327px;width:73px;text-align:center;font-size:14px;line-height:18px;color:#111">19</div>
<div style="left:1696px;top:326px;width:20px;height:20px;border-radius:10px;background:#ff5a5a"></div>
<div class="nw" style="left:1670px;top:327px;width:73px;text-align:center;font-size:14px;line-height:18px;color:#fff">20</div>
<div class="nw" style="left:1745px;top:327px;width:73px;text-align:center;font-size:14px;line-height:18px;color:#111">21</div>
<div class="nw" style="left:1820px;top:327px;width:73px;text-align:center;font-size:14px;line-height:18px;color:#111">22</div>
<div class="nw" style="left:1370px;top:365px;width:73px;text-align:center;font-size:14px;line-height:18px;color:#111">23</div>
<div class="nw" style="left:1445px;top:365px;width:73px;text-align:center;font-size:14px;line-height:18px;color:#111">24</div>
<div class="nw" style="left:1520px;top:365px;width:73px;text-align:center;font-size:14px;line-height:18px;color:#111">25</div>
<div class="nw" style="left:1595px;top:365px;width:73px;text-align:center;font-size:14px;line-height:18px;color:#111">26</div>
<div class="nw" style="left:1670px;top:365px;width:73px;text-align:center;font-size:14px;line-height:18px;color:#111">27</div>
<div class="nw" style="left:1745px;top:365px;width:73px;text-align:center;font-size:14px;line-height:18px;color:#111">28</div>
<div class="nw" style="left:1820px;top:365px;width:73px;text-align:center;font-size:14px;line-height:18px;color:#111">29</div>
<div class="nw" style="left:1370px;top:403px;width:73px;text-align:center;font-size:14px;line-height:18px;color:#111">30</div>
<div class="nw" style="left:1445px;top:403px;width:73px;text-align:center;font-size:14px;line-height:18px;color:#111">31</div>
<div class="nw" style="left:1520px;top:403px;width:73px;text-align:center;font-size:14px;line-height:18px;color:#bbb">1</div>
<div class="nw" style="left:1595px;top:403px;width:73px;text-align:center;font-size:14px;line-height:18px;color:#bbb">2</div>
<div class="nw" style="left:1670px;top:403px;width:73px;text-align:center;font-size:14px;line-height:18px;color:#bbb">3</div>
<div class="nw" style="left:1745px;top:403px;width:73px;text-align:center;font-size:14px;line-height:18px;color:#bbb">4</div>
<div class="nw" style="left:1820px;top:403px;width:73px;text-align:center;font-size:14px;line-height:18px;color:#bbb">5</div>
<div style="left:239px;top:472px;width:549px;height:332px;background:#fff;border:1px solid #d2d2d2;box-shadow:0 1px 1px rgba(0,0,0,.05)"></div>
<div style="left:239px;top:511px;width:549px;height:1px;background:#d2d2d2"></div>
<div style="left:260px;top:485px;width:4px;height:14px;background:#3a86e8"></div>
<div class="nw" style="left:272px;top:485px;font-size:12px;line-height:16px;color:#111;font-weight:bold;">设计中心</div>
<div style="left:270px;top:532px;width:151px;height:116px;background:#eef6fe;border:1px solid #bcdcf6;border-radius:3px"></div>
<svg style="left:320px;top:549px" width="50" height="50" viewBox="-25 -25 50 50"><circle r="25" fill="#c3e0fb"/><circle r="20" fill="#0a7cff"/><path d="M-10 -11 H5 L10 -6 V11 H-10 Z" fill="#fff"/><path d="M5 -11 V-6 H10 Z" fill="#0a7cff" opacity=".0"/><path d="M4.2 -11 L10 -5.2 H4.2 Z" fill="#0a7cff"/><path d="M5 -10 L9 -6 H5 Z" fill="#fff"/><rect x="-5.5" y="-4.5" width="6" height="2" fill="#0a7cff"/><rect x="-5.5" y="-0.5" width="10.5" height="2" fill="#0a7cff"/><rect x="-5.5" y="3.5" width="10.5" height="2" fill="#0a7cff"/></svg>
<div class="nw" style="left:270px;top:611px;width:151px;text-align:center;font-size:16px;font-weight:bold;line-height:22px;color:#555">表单设计</div>
<div style="left:439px;top:532px;width:151px;height:116px;background:#eef6fe;border:1px solid #bcdcf6;border-radius:3px"></div>
<svg style="left:489px;top:549px" width="50" height="50" viewBox="-25 -25 50 50"><circle r="25" fill="#dedafb"/><circle r="20" fill="#9181f7"/><circle cx="-7" cy="-6.5" r="2.6" fill="#fff"/><circle cx="-7" cy="-6.5" r="1" fill="#9181f7"/><path d="M-7 -4 V0.5" stroke="#fff" stroke-width="1.6"/><rect x="-10" y="2.5" width="6.5" height="6.5" fill="#fff"/><circle cx="6" cy="-6.5" r="3" fill="#fff"/><path d="M-2.5 -6.5 H3" stroke="#fff" stroke-width="1.8"/><path d="M6 -3.5 V1" stroke="#fff" stroke-width="1.6"/><path d="M6 0.5 L10.3 4.8 L6 9.1 L1.7 4.8 Z" fill="#fff"/></svg>
<div class="nw" style="left:439px;top:611px;width:151px;text-align:center;font-size:16px;font-weight:bold;line-height:22px;color:#555">流程设计</div>
<div style="left:608px;top:532px;width:151px;height:116px;background:#eef6fe;border:1px solid #bcdcf6;border-radius:3px"></div>
<svg style="left:658px;top:549px" width="50" height="50" viewBox="-25 -25 50 50"><circle r="25" fill="#c8ebe6"/><circle r="20" fill="#2ec4a5"/><path d="M0 -12 L11.5 -6 V6.5 L0 12.5 L-11.5 6.5 V-6 Z" fill="#fff"/><path d="M-11.2 -5.6 L0 0.3 L11.2 -5.6 M0 0.3 V12.5" stroke="#2ec4a5" stroke-width="1.5" fill="none"/></svg>
<div class="nw" style="left:608px;top:611px;width:151px;text-align:center;font-size:16px;font-weight:bold;line-height:22px;color:#555">二三维设计</div>
<div style="left:270px;top:666px;width:151px;height:116px;background:#eef6fe;border:1px solid #bcdcf6;border-radius:3px"></div>
<svg style="left:320px;top:683px" width="50" height="50" viewBox="-25 -25 50 50"><circle r="25" fill="#f1e8d8"/><circle r="20" fill="#ffb84f"/><rect x="-12" y="-11" width="24" height="18" rx="1.5" fill="#fff"/><path d="M-8 -3.5 V-7 H-4.5 M4.5 -7 H8 V-3.5 M8 0 V3.5 H4.5 M-4.5 3.5 H-8 V0" stroke="#ffb84f" stroke-width="1.5" fill="none"/><rect x="-12" y="9.5" width="24" height="1.8" fill="#fff"/></svg>
<div class="nw" style="left:270px;top:745px;width:151px;text-align:center;font-size:16px;font-weight:bold;line-height:22px;color:#555">大屏设计</div>
<div style="left:439px;top:666px;width:151px;height:116px;background:#eef6fe;border:1px solid #bcdcf6;border-radius:3px"></div>
<svg style="left:489px;top:683px" width="50" height="50" viewBox="-25 -25 50 50"><circle r="25" fill="#c6ecf4"/><circle r="20" fill="#00bcd4"/><rect x="-7" y="-11" width="15" height="11" fill="#fff"/><rect x="-5" y="-8.5" width="11" height="1.6" fill="#00bcd4"/><rect x="-5" y="-5.5" width="11" height="1.6" fill="#00bcd4"/><rect x="-10" y="-1" width="19" height="9.5" rx="0.8" fill="#fff"/><rect x="-10" y="-1.8" width="19" height="1" fill="#00bcd4"/><circle cx="7" cy="6" r="5.2" fill="#00bcd4"/><circle cx="7" cy="6" r="4" fill="#fff"/><path d="M4.8 6 L6.5 7.7 L9.3 4.6" stroke="#00bcd4" stroke-width="1.4" fill="none"/></svg>
<div class="nw" style="left:439px;top:745px;width:151px;text-align:center;font-size:16px;font-weight:bold;line-height:22px;color:#555">任务设计</div>
<div style="left:608px;top:666px;width:151px;height:116px;background:#eef6fe;border:1px solid #bcdcf6;border-radius:3px"></div>
<svg style="left:658px;top:683px" width="50" height="50" viewBox="-25 -25 50 50"><circle r="25" fill="#f3d8dc"/><circle r="20" fill="#ff6262"/><rect x="-11.5" y="-10" width="22.5" height="21" fill="#fff"/><rect x="-5.5" y="-12.5" width="11" height="3.5" rx="0.8" fill="#fff"/><rect x="-5.5" y="-10" width="11" height="1" fill="#ff6262"/><path d="M-7.5 1 L-3 -3.5 L0.5 -1 L7 -6.5" stroke="#ff6262" stroke-width="1.7" fill="none"/><rect x="-7.5" y="2.5" width="15" height="1.6" fill="#ff6262"/><rect x="-7.5" y="5.2" width="9" height="1.6" fill="#ff6262"/><rect x="-7.5" y="7.9" width="5" height="1.6" fill="#ff6262"/></svg>
<div class="nw" style="left:608px;top:745px;width:151px;text-align:center;font-size:16px;font-weight:bold;line-height:22px;color:#555">报表设计</div>
<div style="left:798px;top:472px;width:549px;height:352px;background:#fff;border:1px solid #d2d2d2;box-shadow:0 1px 1px rgba(0,0,0,.05)"></div>
<div style="left:798px;top:511px;width:549px;height:1px;background:#d2d2d2"></div>
<div style="left:819px;top:485px;width:4px;height:14px;background:#3a86e8"></div>
<div class="nw" style="left:831px;top:485px;font-size:12px;line-height:16px;color:#111;font-weight:bold;">新闻列表</div>
<div style="left:887px;top:483px;width:18px;height:18px;border-radius:9px;background:#1280f5;color:#fff;font-size:12px;font-weight:bold;line-height:18px;text-align:center">6</div>
<div class="nw" style="left:1285px;top:485px;font-size:12px;line-height:16px;color:#333">更多</div>
<svg style="left:1312px;top:489px" width="14" height="7" viewBox="0 0 14 7"><path d="M0.8 1.2 L5.3 3.5 L0.8 5.8 M7.8 1.2 L12.3 3.5 L7.8 5.8" stroke="#333" stroke-width="1" fill="none"/></svg>
<div style="left:799px;top:512px;width:547px;height:40px;background:#f6f7f9"></div>
<div style="left:799px;top:552px;width:547px;height:1px;background:#dadada"></div>
<div style="left:1195px;top:512px;width:1px;height:298px;background:#dadada"></div>
<div style="left:799px;top:821px;width:547px;height:1px;background:#eceef3"></div>
<div class="nw" style="left:842px;top:523.5px;font-size:14px;line-height:18px;color:#333;">标题</div>
<div class="nw" style="left:1206px;top:523.5px;font-size:14px;line-height:18px;color:#333;">时间</div>
<div style="left:799px;top:595px;width:547px;height:1px;background:#dadada"></div>
<div style="left:822px;top:570px;width:8px;height:8px;border-radius:4px;background:#0a7cff;box-shadow:0 0 3px 2px rgba(10,124,255,.28)"></div>
<div class="nw" style="left:846px;top:564px;font-size:12px;line-height:18px;color:#333;">重庆梅安森与山西省国新能源发展集团智能化建设合作</div>
<div class="nw" style="left:1206px;top:566px;font-size:12.8px;line-height:18px;color:#999;">2020-12-15 17:35:58</div>
<div style="left:799px;top:638px;width:547px;height:1px;background:#dadada"></div>
<div style="left:822px;top:613px;width:8px;height:8px;border-radius:4px;background:#0a7cff;box-shadow:0 0 3px 2px rgba(10,124,255,.28)"></div>
<div class="nw" style="left:846px;top:607px;font-size:12px;line-height:18px;color:#333;">热烈祝贺<span style="position:static;display:inline-block;width:12px;text-align:right">“</span>梅安森杯<span style="position:static;display:inline-block;width:12px;text-align:left">”</span>职业技能竞赛选手赛前培训成功举办</div>
<div class="nw" style="left:1206px;top:609px;font-size:12.8px;line-height:18px;color:#999;">2020-12-15 17:34:03</div>
<div style="left:799px;top:681px;width:547px;height:1px;background:#dadada"></div>
<div style="left:822px;top:656px;width:8px;height:8px;border-radius:4px;background:#0a7cff;box-shadow:0 0 3px 2px rgba(10,124,255,.28)"></div>
<div class="nw" style="left:846px;top:650px;font-size:12px;line-height:18px;color:#333;">第四届全国煤炭业（智能安全监测）职业技能赛</div>
<div class="nw" style="left:1206px;top:652px;font-size:12.8px;line-height:18px;color:#999;">2020-12-15 17:32:54</div>
<div style="left:799px;top:724px;width:547px;height:1px;background:#dadada"></div>
<div style="left:822px;top:699px;width:8px;height:8px;border-radius:4px;background:#0a7cff;box-shadow:0 0 3px 2px rgba(10,124,255,.28)"></div>
<div class="nw" style="left:846px;top:693px;font-size:12px;line-height:18px;color:#333;">梅安森科技<span style="position:static;display:inline-block;width:12px;text-align:right">“</span>KJ73X和安全监控模拟故障仿真软件技术平台<span style="position:static;display:inline-block;width:12px;text-align:left">”</span></div>
<div class="nw" style="left:1206px;top:695px;font-size:12.8px;line-height:18px;color:#999;">2020-12-15 17:15:55</div>
<div style="left:799px;top:767px;width:547px;height:1px;background:#dadada"></div>
<div style="left:822px;top:742px;width:8px;height:8px;border-radius:4px;background:#0a7cff;box-shadow:0 0 3px 2px rgba(10,124,255,.28)"></div>
<div class="nw" style="left:846px;top:736px;font-size:12px;line-height:18px;color:#333;">梅安森科技<span style="position:static;display:inline-block;width:12px;text-align:right">“</span>煤与瓦斯突出实时诊断系统<span style="position:static;display:inline-block;width:12px;text-align:left">”</span>迎来发展机遇</div>
<div class="nw" style="left:1206px;top:738px;font-size:12.8px;line-height:18px;color:#999;">2020-12-15 17:06:24</div>
<div style="left:799px;top:810px;width:547px;height:1px;background:#dadada"></div>
<div style="left:822px;top:785px;width:8px;height:8px;border-radius:4px;background:#0a7cff;box-shadow:0 0 3px 2px rgba(10,124,255,.28)"></div>
<div class="nw" style="left:846px;top:779px;font-size:12px;line-height:18px;color:#333;">梅安森科技亮相2019青岛国际软件融合创新博览会</div>
<div class="nw" style="left:1206px;top:781px;font-size:12.8px;line-height:18px;color:#999;">2020-12-15 17:05:24</div>
<div style="left:1357px;top:472px;width:600px;height:352px;background:#fff;border:1px solid #d2d2d2;box-shadow:0 1px 1px rgba(0,0,0,.05)"></div>
<div style="left:1357px;top:511px;width:600px;height:1px;background:#d2d2d2"></div>
<div style="left:1378px;top:485px;width:4px;height:14px;background:#3a86e8"></div>
<div class="nw" style="left:1390px;top:485px;font-size:12px;line-height:16px;color:#111;font-weight:bold;">功能使用统计</div>
<div style="left:1693px;top:480px;width:94px;height:23px;background:#fff;border:1px solid #e2e2e2;border-radius:2px"></div>
<div class="nw" style="left:1709px;top:483px;font-size:12px;line-height:16px;color:#555;">10项</div>
<svg style="left:1765px;top:487px" width="11" height="7" viewBox="0 0 11 7"><path d="M0.5 0.5 L5.5 5.5 L10.5 0.5" stroke="#999" stroke-width="1" fill="none"/></svg>
<div style="left:1792px;top:480px;width:94px;height:23px;background:#fff;border:1px solid #e2e2e2;border-radius:2px"></div>
<div class="nw" style="left:1808px;top:483px;font-size:12px;line-height:16px;color:#555;">本年</div>
<svg style="left:1864px;top:487px" width="11" height="7" viewBox="0 0 11 7"><path d="M0.5 0.5 L5.5 5.5 L10.5 0.5" stroke="#999" stroke-width="1" fill="none"/></svg>
<div style="left:1412px;top:782px;width:438px;height:1px;background:#c8c8c8"></div>
<div class="nw" style="left:1370px;top:773px;width:35px;text-align:right;font-size:12px;line-height:16px;color:#50505e">0</div>
<div style="left:1412px;top:748px;width:438px;height:1px;background:#d6d6d6"></div>
<div class="nw" style="left:1370px;top:739px;width:35px;text-align:right;font-size:12px;line-height:16px;color:#50505e">100</div>
<div style="left:1412px;top:713px;width:438px;height:1px;background:#d6d6d6"></div>
<div class="nw" style="left:1370px;top:704px;width:35px;text-align:right;font-size:12px;line-height:16px;color:#50505e">200</div>
<div style="left:1412px;top:679px;width:438px;height:1px;background:#d6d6d6"></div>
<div class="nw" style="left:1370px;top:670px;width:35px;text-align:right;font-size:12px;line-height:16px;color:#50505e">300</div>
<div style="left:1412px;top:645px;width:438px;height:1px;background:#d6d6d6"></div>
<div class="nw" style="left:1370px;top:636px;width:35px;text-align:right;font-size:12px;line-height:16px;color:#50505e">400</div>
<div style="left:1412px;top:611px;width:438px;height:1px;background:#d6d6d6"></div>
<div class="nw" style="left:1370px;top:602px;width:35px;text-align:right;font-size:12px;line-height:16px;color:#50505e">500</div>
<div style="left:1412px;top:576px;width:438px;height:1px;background:#d6d6d6"></div>
<div class="nw" style="left:1370px;top:567px;width:35px;text-align:right;font-size:12px;line-height:16px;color:#50505e">600</div>
<div style="left:1412px;top:542px;width:438px;height:1px;background:#d6d6d6"></div>
<div class="nw" style="left:1370px;top:533px;width:35px;text-align:right;font-size:12px;line-height:16px;color:#50505e">700</div>
<div style="left:1412px;top:542px;width:1px;height:240px;background:#c8c8c8"></div>
<div style="left:1427.9px;top:548.2px;width:12px;height:233.8px;border-radius:6px 6px 0 0;background:linear-gradient(#5eacf7,#0a7cff)"></div>
<div style="left:1471.7px;top:573.9px;width:12px;height:208.1px;border-radius:6px 6px 0 0;background:linear-gradient(#5eacf7,#0a7cff)"></div>
<div style="left:1515.5px;top:640.1px;width:12px;height:141.9px;border-radius:6px 6px 0 0;background:linear-gradient(#5eacf7,#0a7cff)"></div>
<div style="left:1559.3px;top:660.6px;width:12px;height:121.4px;border-radius:6px 6px 0 0;background:linear-gradient(#5eacf7,#0a7cff)"></div>
<div style="left:1603.1px;top:677.1px;width:12px;height:104.9px;border-radius:6px 6px 0 0;background:linear-gradient(#5eacf7,#0a7cff)"></div>
<div style="left:1646.9px;top:678.5px;width:12px;height:103.5px;border-radius:6px 6px 0 0;background:linear-gradient(#5eacf7,#0a7cff)"></div>
<div style="left:1690.7px;top:683.9px;width:12px;height:98.1px;border-radius:6px 6px 0 0;background:linear-gradient(#5eacf7,#0a7cff)"></div>
<div style="left:1734.5px;top:692.2px;width:12px;height:89.8px;border-radius:6px 6px 0 0;background:linear-gradient(#5eacf7,#0a7cff)"></div>
<div style="left:1778.3px;top:694.2px;width:12px;height:87.8px;border-radius:6px 6px 0 0;background:linear-gradient(#5eacf7,#0a7cff)"></div>
<div style="left:1822.1px;top:711.0px;width:12px;height:71.0px;border-radius:6px 6px 0 0;background:linear-gradient(#5eacf7,#0a7cff)"></div>
<div style="left:239px;top:834px;width:1700px;height:200px;background:#fff;border:1px solid #d2d2d2;box-shadow:0 1px 1px rgba(0,0,0,.05)"></div>
<div style="left:239px;top:873px;width:1700px;height:1px;background:#d2d2d2"></div>
<div style="left:260px;top:847px;width:4px;height:14px;background:#3a86e8"></div>
<div class="nw" style="left:272px;top:847px;font-size:12px;line-height:16px;color:#111;font-weight:bold;">快捷方式</div>
<div style="left:260px;top:894px;width:211px;height:80px;background:#eef6fe;border:1px solid #bcdcf6"></div>
<svg style="left:271px;top:907px" width="48" height="48" viewBox="0 0 48 48"><rect x="0" y="0" width="48" height="48" rx="4.5" fill="#f8ab57"/><path d="M22 12.2 H39.6 V32 H22 Z M26 16.2 V32 H35.6 V16.2 Z" fill="#fff" fill-rule="evenodd" transform="translate(0 0)"/><rect x="11.3" y="18.7" width="18" height="20" rx="2" fill="#fff"/><path d="M26 18.7 V16.2" stroke="#f8ab57" stroke-width="0"/></svg>
<div style="left:329px;top:907px;width:1px;height:40px;border-left:1px dashed #777"></div>
<div class="nw" style="left:330px;top:921px;width:141px;text-align:center;font-size:16px;font-weight:bold;line-height:22px;color:#555">公司管理</div>
<div style="left:491px;top:894px;width:211px;height:80px;background:#eef6fe;border:1px solid #bcdcf6"></div>
<svg style="left:502px;top:907px" width="48" height="48" viewBox="0 0 48 48"><rect x="0" y="0" width="48" height="48" rx="4.5" fill="#f78080"/><rect x="15" y="13.4" width="21.5" height="21.5" rx="3" fill="#fff"/></svg>
<div style="left:560px;top:907px;width:1px;height:40px;border-left:1px dashed #777"></div>
<div class="nw" style="left:561px;top:921px;width:141px;text-align:center;font-size:16px;font-weight:bold;line-height:22px;color:#555">部门管理</div>
<div style="left:722px;top:894px;width:211px;height:80px;background:#eef6fe;border:1px solid #bcdcf6"></div>
<svg style="left:733px;top:907px" width="48" height="48" viewBox="0 0 48 48"><rect x="0" y="0" width="48" height="48" rx="4.5" fill="#a8d0f5"/><path d="M24 13.4 L40 19 L24 24.6 L8 19 Z" fill="#fff"/><path d="M13 22 V28 Q24 33 35 28 V22 L24 26 Z" fill="#fff"/></svg>
<div style="left:791px;top:907px;width:1px;height:40px;border-left:1px dashed #777"></div>
<div class="nw" style="left:792px;top:921px;width:141px;text-align:center;font-size:16px;font-weight:bold;line-height:22px;color:#555">岗位管理</div>
<div style="left:953px;top:894px;width:211px;height:80px;background:#eef6fe;border:1px solid #bcdcf6"></div>
<svg style="left:964px;top:907px" width="48" height="48" viewBox="0 0 48 48"><rect x="0" y="0" width="48" height="48" rx="4.5" fill="#5aabf8"/><circle cx="17.3" cy="15.8" r="3.7" fill="#fff"/><circle cx="32.7" cy="15.8" r="3.7" fill="#fff"/><circle cx="25" cy="21" r="5" fill="#fff"/><path d="M11 30 Q11 20.5 17.3 20.5 Q21 20.5 22 23 Q19 26 19 31 H11Z M39 30 Q39 20.5 32.7 20.5 Q29 20.5 28 23 Q31 26 31 31 H39Z" fill="#fff"/></svg>
<div style="left:1022px;top:907px;width:1px;height:40px;border-left:1px dashed #777"></div>
<div class="nw" style="left:1023px;top:921px;width:141px;text-align:center;font-size:16px;font-weight:bold;line-height:22px;color:#555">用户管理</div>
<div style="left:1184px;top:894px;width:211px;height:80px;background:#eef6fe;border:1px solid #bcdcf6"></div>
<svg style="left:1195px;top:907px" width="48" height="48" viewBox="0 0 48 48"><rect x="0" y="0" width="48" height="48" rx="4.5" fill="#40fc00"/><path d="M18 24 L30 18.4 M18 24 L30 30" stroke="#fff" stroke-width="2.4"/><circle cx="30" cy="18.4" r="4.4" fill="#fff"/><circle cx="18" cy="24" r="4.4" fill="#fff"/><circle cx="30" cy="30" r="4.4" fill="#fff"/></svg>
<div style="left:1253px;top:907px;width:1px;height:40px;border-left:1px dashed #777"></div>
<div class="nw" style="left:1254px;top:921px;width:141px;text-align:center;font-size:16px;font-weight:bold;line-height:22px;color:#555">流程任务</div>
<div style="left:1415px;top:894px;width:211px;height:80px;background:#eef6fe;border:1px solid #bcdcf6"></div>
<svg style="left:1426px;top:907px" width="48" height="48" viewBox="0 0 48 48"><rect x="0" y="0" width="48" height="48" rx="4.5" fill="#9e80f5"/><circle cx="20.5" cy="24.2" r="6.6" fill="#fff"/><rect x="-1.76" y="-8.40" width="3.53" height="2.80" transform="translate(20.5 24.2) rotate(0.0)" fill="#fff"/><rect x="-1.76" y="-8.40" width="3.53" height="2.80" transform="translate(20.5 24.2) rotate(45.0)" fill="#fff"/><rect x="-1.76" y="-8.40" width="3.53" height="2.80" transform="translate(20.5 24.2) rotate(90.0)" fill="#fff"/><rect x="-1.76" y="-8.40" width="3.53" height="2.80" transform="translate(20.5 24.2) rotate(135.0)" fill="#fff"/><rect x="-1.76" y="-8.40" width="3.53" height="2.80" transform="translate(20.5 24.2) rotate(180.0)" fill="#fff"/><rect x="-1.76" y="-8.40" width="3.53" height="2.80" transform="translate(20.5 24.2) rotate(225.0)" fill="#fff"/><rect x="-1.76" y="-8.40" width="3.53" height="2.80" transform="translate(20.5 24.2) rotate(270.0)" fill="#fff"/><rect x="-1.76" y="-8.40" width="3.53" height="2.80" transform="translate(20.5 24.2) rotate(315.0)" fill="#fff"/><circle cx="20.5" cy="24.2" r="3" fill="#9e80f5"/><circle cx="32.6" cy="17.4" r="3.8" fill="#fff"/><rect x="-1.05" y="-5.00" width="2.10" height="2.20" transform="translate(32.6 17.4) rotate(0.0)" fill="#fff"/><rect x="-1.05" y="-5.00" width="2.10" height="2.20" transform="translate(32.6 17.4) rotate(60.0)" fill="#fff"/><rect x="-1.05" y="-5.00" width="2.10" height="2.20" transform="translate(32.6 17.4) rotate(120.0)" fill="#fff"/><rect x="-1.05" y="-5.00" width="2.10" height="2.20" transform="translate(32.6 17.4) rotate(180.0)" fill="#fff"/><rect x="-1.05" y="-5.00" width="2.10" height="2.20" transform="translate(32.6 17.4) rotate(240.0)" fill="#fff"/><rect x="-1.05" y="-5.00" width="2.10" height="2.20" transform="translate(32.6 17.4) rotate(300.0)" fill="#fff"/><circle cx="32.6" cy="17.4" r="1.5" fill="#9e80f5"/></svg>
<div style="left:1484px;top:907px;width:1px;height:40px;border-left:1px dashed #777"></div>
<div class="nw" style="left:1485px;top:921px;width:141px;text-align:center;font-size:16px;font-weight:bold;line-height:22px;color:#555">自由协同</div>
<div style="left:1646px;top:894px;width:211px;height:80px;background:#eef6fe;border:1px solid #bcdcf6"></div>
<svg style="left:1657px;top:907px" width="48" height="48" viewBox="0 0 48 48"><circle cx="24" cy="24" r="9" fill="none" stroke="#fff" stroke-width="1.6"/><circle cx="24" cy="24" r="5.5" fill="none" stroke="#fff" stroke-width="1.6"/></svg>
<div style="left:1715px;top:907px;width:1px;height:40px;border-left:1px dashed #777"></div>
<div class="nw" style="left:1716px;top:921px;width:141px;text-align:center;font-size:16px;font-weight:bold;line-height:22px;color:#555">数据源管理</div>
<div style="left:1874px;top:369px;width:40px;height:42px;background:#f4f6f6;border:1px solid #d3dcdf;border-radius:4px 0 0 4px"></div>
<svg style="left:1888px;top:382px" width="16" height="16" viewBox="-8 -8 16 16"><circle r="4.4" fill="#4a5a66"/><rect x="-1.3" y="-6.2" width="2.6" height="3" transform="rotate(0)" fill="#4a5a66"/><rect x="-1.3" y="-6.2" width="2.6" height="3" transform="rotate(45)" fill="#4a5a66"/><rect x="-1.3" y="-6.2" width="2.6" height="3" transform="rotate(90)" fill="#4a5a66"/><rect x="-1.3" y="-6.2" width="2.6" height="3" transform="rotate(135)" fill="#4a5a66"/><rect x="-1.3" y="-6.2" width="2.6" height="3" transform="rotate(180)" fill="#4a5a66"/><rect x="-1.3" y="-6.2" width="2.6" height="3" transform="rotate(225)" fill="#4a5a66"/><rect x="-1.3" y="-6.2" width="2.6" height="3" transform="rotate(270)" fill="#4a5a66"/><rect x="-1.3" y="-6.2" width="2.6" height="3" transform="rotate(315)" fill="#4a5a66"/><circle r="1.9" fill="#f4f6f6"/></svg>
<div style="left:1848px;top:869px;width:48px;height:48px;border-radius:24px;background:rgba(255,90,90,.25)"></div>
<div style="left:1852px;top:873px;width:40px;height:40px;border-radius:20px;background:rgba(255,90,90,.35)"></div>
<div style="left:1858px;top:879px;width:28px;height:28px;border-radius:14px;background:#ff5a5a"></div>
<svg style="left:1863px;top:888px" width="18" height="12" viewBox="0 0 18 12"><path d="M0.5 3.6h3l4.6-3.4v11.6l-4.6-3.4h-3z" fill="#fff"/><path d="M10.2 3.2 A3.2 3.2 0 0 1 10.2 8.8 M12.6 0.9 A5.2 5.2 0 0 1 12.6 11.1" stroke="#fff" stroke-width="1.6" fill="none"/></svg>
</body></html>
